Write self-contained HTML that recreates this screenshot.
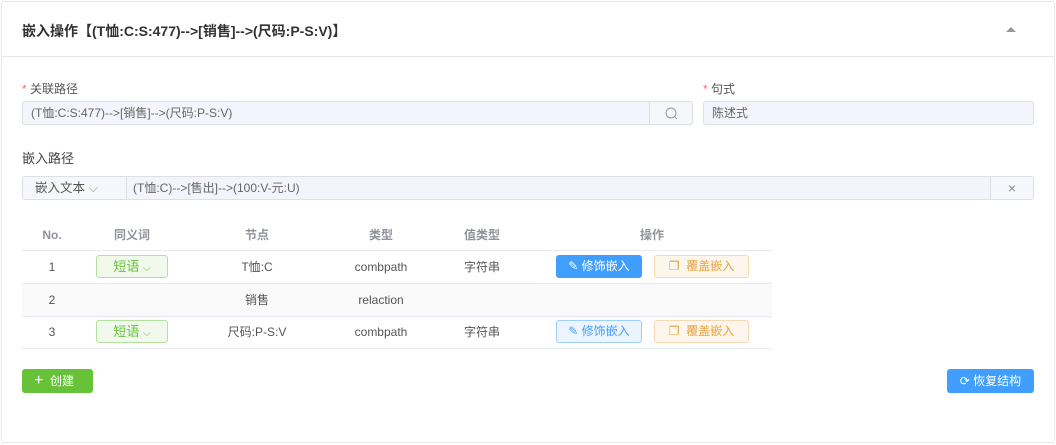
<!DOCTYPE html>
<html><head><meta charset="utf-8"><style>
*{box-sizing:border-box;margin:0;padding:0}
body{width:1056px;height:445px;background:#fff;font-family:"Liberation Sans","Noto Sans CJK SC",sans-serif;font-size:12px;color:#555;position:relative;overflow:hidden}
.a{position:absolute}
.card{left:1px;top:1px;width:1054px;height:442px;border:1px solid #e4e6ec;border-radius:3px}
.hdr{left:1px;top:56px;width:1054px;height:1px;background:#e4e6ec}
.inp{border:1px solid #dcdfe6;background:#f3f4fc;border-radius:3px;height:24px;line-height:22px;padding-left:8px;color:#666}
.lbl{font-size:12px;color:#555}
.lbl b{color:#f56c6c;font-weight:normal}
.th{font-weight:bold;color:#909399;text-align:center;top:226px;height:18px;line-height:18px}
.row{left:22px;width:750px;height:1px;background:#e8eaf2}
.c{text-align:center;color:#555;height:18px;line-height:18px}
.tag{width:72px;height:23px;border:1px solid #b3e19d;background:#f0f9eb;color:#67c23a;border-radius:3px;text-align:center;line-height:21px;font-size:13px}
.b1{width:86px;height:23px;border-radius:3px;text-align:center;line-height:21px;font-size:12px}
.b2{width:95px;height:23px;border:1px solid #f5dab1;background:#fdf6ec;color:#e6a23c;border-radius:3px;text-align:center;line-height:21px}
</style></head><body>
<div class="a card"></div>
<div class="a hdr"></div>
<div class="a" style="left:22px;top:21px;font-size:14px;font-weight:bold;color:#333">嵌入操作【(T恤:C:S:477)-->[销售]-->(尺码:P-S:V)】</div>
<div class="a" style="left:1006px;top:27px;width:0;height:0;border-left:5px solid transparent;border-right:5px solid transparent;border-bottom:5px solid #999"></div>

<div class="a lbl" style="left:22px;top:80px"><b>*</b> 关联路径</div>
<div class="a inp" style="left:22px;top:101px;width:671px">(T恤:C:S:477)-->[销售]-->(尺码:P-S:V)</div>
<div class="a" style="left:649px;top:101px;width:44px;height:24px;border:1px solid #dcdfe6;background:#f5f7fa;border-radius:0 3px 3px 0">
<svg width="44" height="22" viewBox="0 0 44 22"><circle cx="21" cy="11" r="5" fill="none" stroke="#999" stroke-width="1"/><line x1="24.5" y1="14.5" x2="27" y2="17" stroke="#999"/></svg></div>
<div class="a lbl" style="left:703px;top:80px"><b>*</b> 句式</div>
<div class="a inp" style="left:703px;top:101px;width:331px">陈述式</div>

<div class="a" style="left:22px;top:148px;font-size:13px;color:#444">嵌入路径</div>
<div class="a inp" style="left:22px;top:176px;width:1012px;padding-left:110px">(T恤:C)-->[售出]-->(100:V-元:U)</div>
<div class="a" style="left:22px;top:176px;width:105px;height:24px;border:1px solid #dcdfe6;background:#f5f7fa;border-radius:3px 0 0 3px;line-height:22px;padding-left:12px;color:#555;font-size:12.5px">嵌入文本 <span style="color:#999">⌵</span></div>
<div class="a" style="left:990px;top:176px;width:44px;height:24px;border:1px solid #dcdfe6;background:#f5f7fa;border-radius:0 3px 3px 0;text-align:center;line-height:22px;color:#888;font-size:14px">×</div>

<div class="a th" style="left:22px;width:60px">No.</div>
<div class="a th" style="left:92px;width:80px">同义词</div>
<div class="a th" style="left:217px;width:80px">节点</div>
<div class="a th" style="left:341px;width:80px">类型</div>
<div class="a th" style="left:442px;width:80px">值类型</div>
<div class="a th" style="left:612px;width:80px">操作</div>
<div class="a row" style="top:250px"></div>
<div class="a" style="left:22px;top:284px;width:750px;height:32px;background:#f9f9f9"></div>
<div class="a row" style="top:283px"></div>
<div class="a row" style="top:316px"></div>
<div class="a row" style="top:348px"></div>

<div class="a c" style="left:22px;width:60px;top:258px">1</div>
<div class="a tag" style="left:96px;top:255px">短语 <span style="font-size:10px">⌵</span></div>
<div class="a c" style="left:197px;width:120px;top:258px">T恤:C</div>
<div class="a c" style="left:331px;width:100px;top:258px">combpath</div>
<div class="a c" style="left:442px;width:80px;top:258px">字符串</div>
<div class="a b1" style="left:556px;top:255px;background:#409eff;color:#fff;border:1px solid #409eff">✎ 修饰嵌入</div>
<div class="a b2" style="left:654px;top:255px">❐ &nbsp;覆盖嵌入</div>

<div class="a c" style="left:22px;width:60px;top:291px">2</div>
<div class="a c" style="left:197px;width:120px;top:291px">销售</div>
<div class="a c" style="left:331px;width:100px;top:291px">relaction</div>

<div class="a c" style="left:22px;width:60px;top:323px">3</div>
<div class="a tag" style="left:96px;top:320px">短语 <span style="font-size:10px">⌵</span></div>
<div class="a c" style="left:197px;width:120px;top:323px">尺码:P-S:V</div>
<div class="a c" style="left:331px;width:100px;top:323px">combpath</div>
<div class="a c" style="left:442px;width:80px;top:323px">字符串</div>
<div class="a b1" style="left:556px;top:320px;background:#ecf5ff;color:#409eff;border:1px solid #a0cfff">✎ 修饰嵌入</div>
<div class="a b2" style="left:654px;top:320px">❐ &nbsp;覆盖嵌入</div>

<div class="a" style="left:22px;top:369px;width:71px;height:24px;background:#67c23a;border-radius:3px;color:#fff;line-height:24px;padding-left:12px"><span style="font-size:16px">+</span>&nbsp; 创建</div>
<div class="a" style="left:947px;top:369px;width:87px;height:24px;background:#409eff;border-radius:3px;color:#fff;line-height:24px;text-align:center">⟳ 恢复结构</div>
</body></html>
